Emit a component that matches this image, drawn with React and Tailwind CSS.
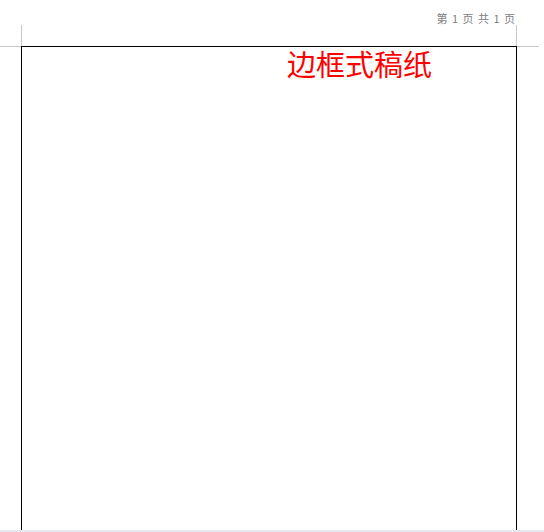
export default function App() {
  return (
    <div className="w-[544px] h-[532px] bg-white overflow-hidden flex flex-col" style={{}}>
      <div className="h-[25px] flex justify-end items-start pr-[28px] pt-[11px]">
        <span className="text-[11px] leading-[14px] text-[#808080] tracking-[1px] whitespace-pre" style={{ fontFamily: '"Noto Sans CJK SC", sans-serif' }}>
          第 1 页 共 1 页
        </span>
      </div>
      <div className="flex h-[21px]">
        <div className="w-[21px]" />
        <div className="w-[496px] border-l border-r border-[#c8c8c8]" />
      </div>
      <div className="flex items-start">
        <div className="w-[21px] h-px bg-[#c8c8c8]" />
        <div className="w-[496px] h-[484px] border-t border-l border-r border-black pl-[265px] pt-[0px]">
          <div className="text-[29px] leading-[33px] text-[#ff0000]" style={{ fontFamily: '"Noto Sans CJK SC", sans-serif' }}>
            边框式稿纸
          </div>
        </div>
        <div className="w-[22px] h-px bg-[#c8c8c8]" />
      </div>
      <div className="flex-1 bg-[#e8e8ef]" />
    </div>
  );
}
